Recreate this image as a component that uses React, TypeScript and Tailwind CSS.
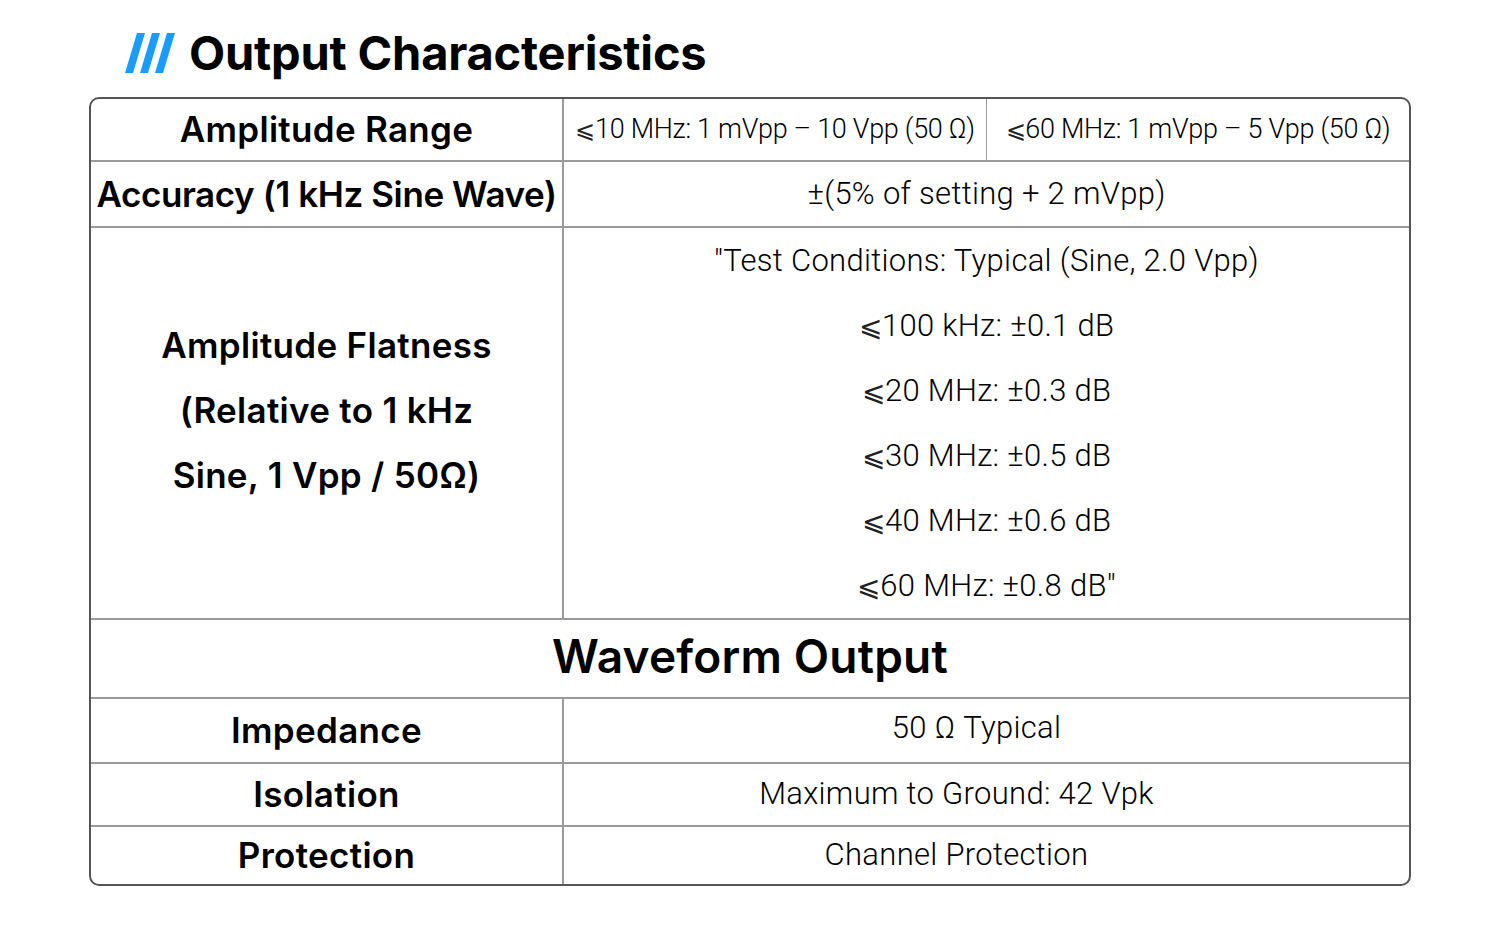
const labelBase = 'text-[35px] font-semibold text-black';
const labelClass = `${labelBase} tracking-[0.3px]`;
const valueClass = 'text-[31px] font-light text-black tracking-[0.3px]';
const inter = { fontFamily: 'Inter, "Noto Sans", sans-serif' };

function Le() {
  return (
    <span className="text-[0.9em] leading-[0] text-[#222]" style={{ fontFamily: '"DejaVu Sans", sans-serif' }}>
      ⩽
    </span>
  );
}

function Slashes() {
  return (
    <svg width="50" height="40" viewBox="0 0 50 40" className="shrink-0">
      {[0, 15, 30].map((x) => (
        <polygon key={x} points={`${x + 12},0 ${x + 20},0 ${x + 8},40 ${x},40`} fill="#1a9bff" />
      ))}
    </svg>
  );
}

function Row({
  label,
  height,
  last,
  children,
}: {
  label: React.ReactNode;
  height: string;
  last?: boolean;
  children: React.ReactNode;
}) {
  return (
    <div className={`flex ${height} ${last ? '' : 'border-b-2 border-[#9a9a9a]'}`}>
      <div
        className="w-[473px] shrink-0 border-r-2 border-[#9a9a9a] flex items-center justify-center text-center whitespace-nowrap"
        style={inter}
      >
        {label}
      </div>
      <div className="flex-1 flex items-center justify-center text-center">{children}</div>
    </div>
  );
}

export default function App() {
  return (
    <div
      className="w-[1500px] h-[931px] bg-white"
      style={{ fontFamily: 'Roboto, "Noto Sans", sans-serif' }}
    >
      <div className="flex items-center gap-[14px] pl-[125px] pt-[28px] h-[97px] pb-[20px]">
        <Slashes />
        <h1 className="text-[47px] font-bold leading-none text-black tracking-[-0.2px]" style={inter}>
          Output Characteristics
        </h1>
      </div>

      <div className="mx-auto w-[1322px] border-2 border-[#555] rounded-[10px] overflow-hidden">
        <Row label={<span className={labelClass}>Amplitude Range</span>} height="h-[63px]">
          <div className="flex h-full w-full">
            <div className="flex-1 flex items-center justify-center border-r border-[#9a9a9a]">
              <span className="text-[27px] font-light tracking-[-0.3px]">
                <Le />10 MHz: 1 mVpp – 10 Vpp (50 Ω)
              </span>
            </div>
            <div className="flex-1 flex items-center justify-center">
              <span className="text-[27px] font-light tracking-[-0.3px]">
                <Le />60 MHz: 1 mVpp – 5 Vpp (50 Ω)
              </span>
            </div>
          </div>
        </Row>

        <Row
          label={<span className={`${labelBase} tracking-[-0.4px]`}>Accuracy (1 kHz Sine Wave)</span>}
          height="h-[66px]"
        >
          <span className={valueClass}>±(5% of setting + 2 mVpp)</span>
        </Row>

        <Row
          label={
            <div className={`${labelClass} leading-[65px] pb-[26px]`}>
              <div>Amplitude Flatness</div>
              <div>(Relative to 1 kHz</div>
              <div>Sine, 1 Vpp / 50Ω)</div>
            </div>
          }
          height="h-[392px]"
        >
          <div className={`${valueClass} leading-[65px]`}>
            <div>"Test Conditions: Typical (Sine, 2.0 Vpp)</div>
            <div><Le />100 kHz: ±0.1 dB</div>
            <div><Le />20 MHz: ±0.3 dB</div>
            <div><Le />30 MHz: ±0.5 dB</div>
            <div><Le />40 MHz: ±0.6 dB</div>
            <div><Le />60 MHz: ±0.8 dB"</div>
          </div>
        </Row>

        <div className="h-[79px] border-b-2 border-[#9a9a9a] flex items-center justify-center pb-[4px]">
          <span className="text-[46px] font-semibold text-black tracking-[0.2px]" style={inter}>
            Waveform Output
          </span>
        </div>

        <Row label={<span className={labelClass}>Impedance</span>} height="h-[65px]">
          <span className={`${valueClass} pr-[20px] pb-[4px]`}>50 Ω Typical</span>
        </Row>
        <Row label={<span className={labelClass}>Isolation</span>} height="h-[63px]">
          <span className={`${valueClass} pr-[60px]`}>Maximum to Ground: 42 Vpk</span>
        </Row>
        <Row label={<span className={labelClass}>Protection</span>} height="h-[57px]" last>
          <span className={`${valueClass} pr-[60px]`}>Channel Protection</span>
        </Row>
      </div>
    </div>
  );
}
